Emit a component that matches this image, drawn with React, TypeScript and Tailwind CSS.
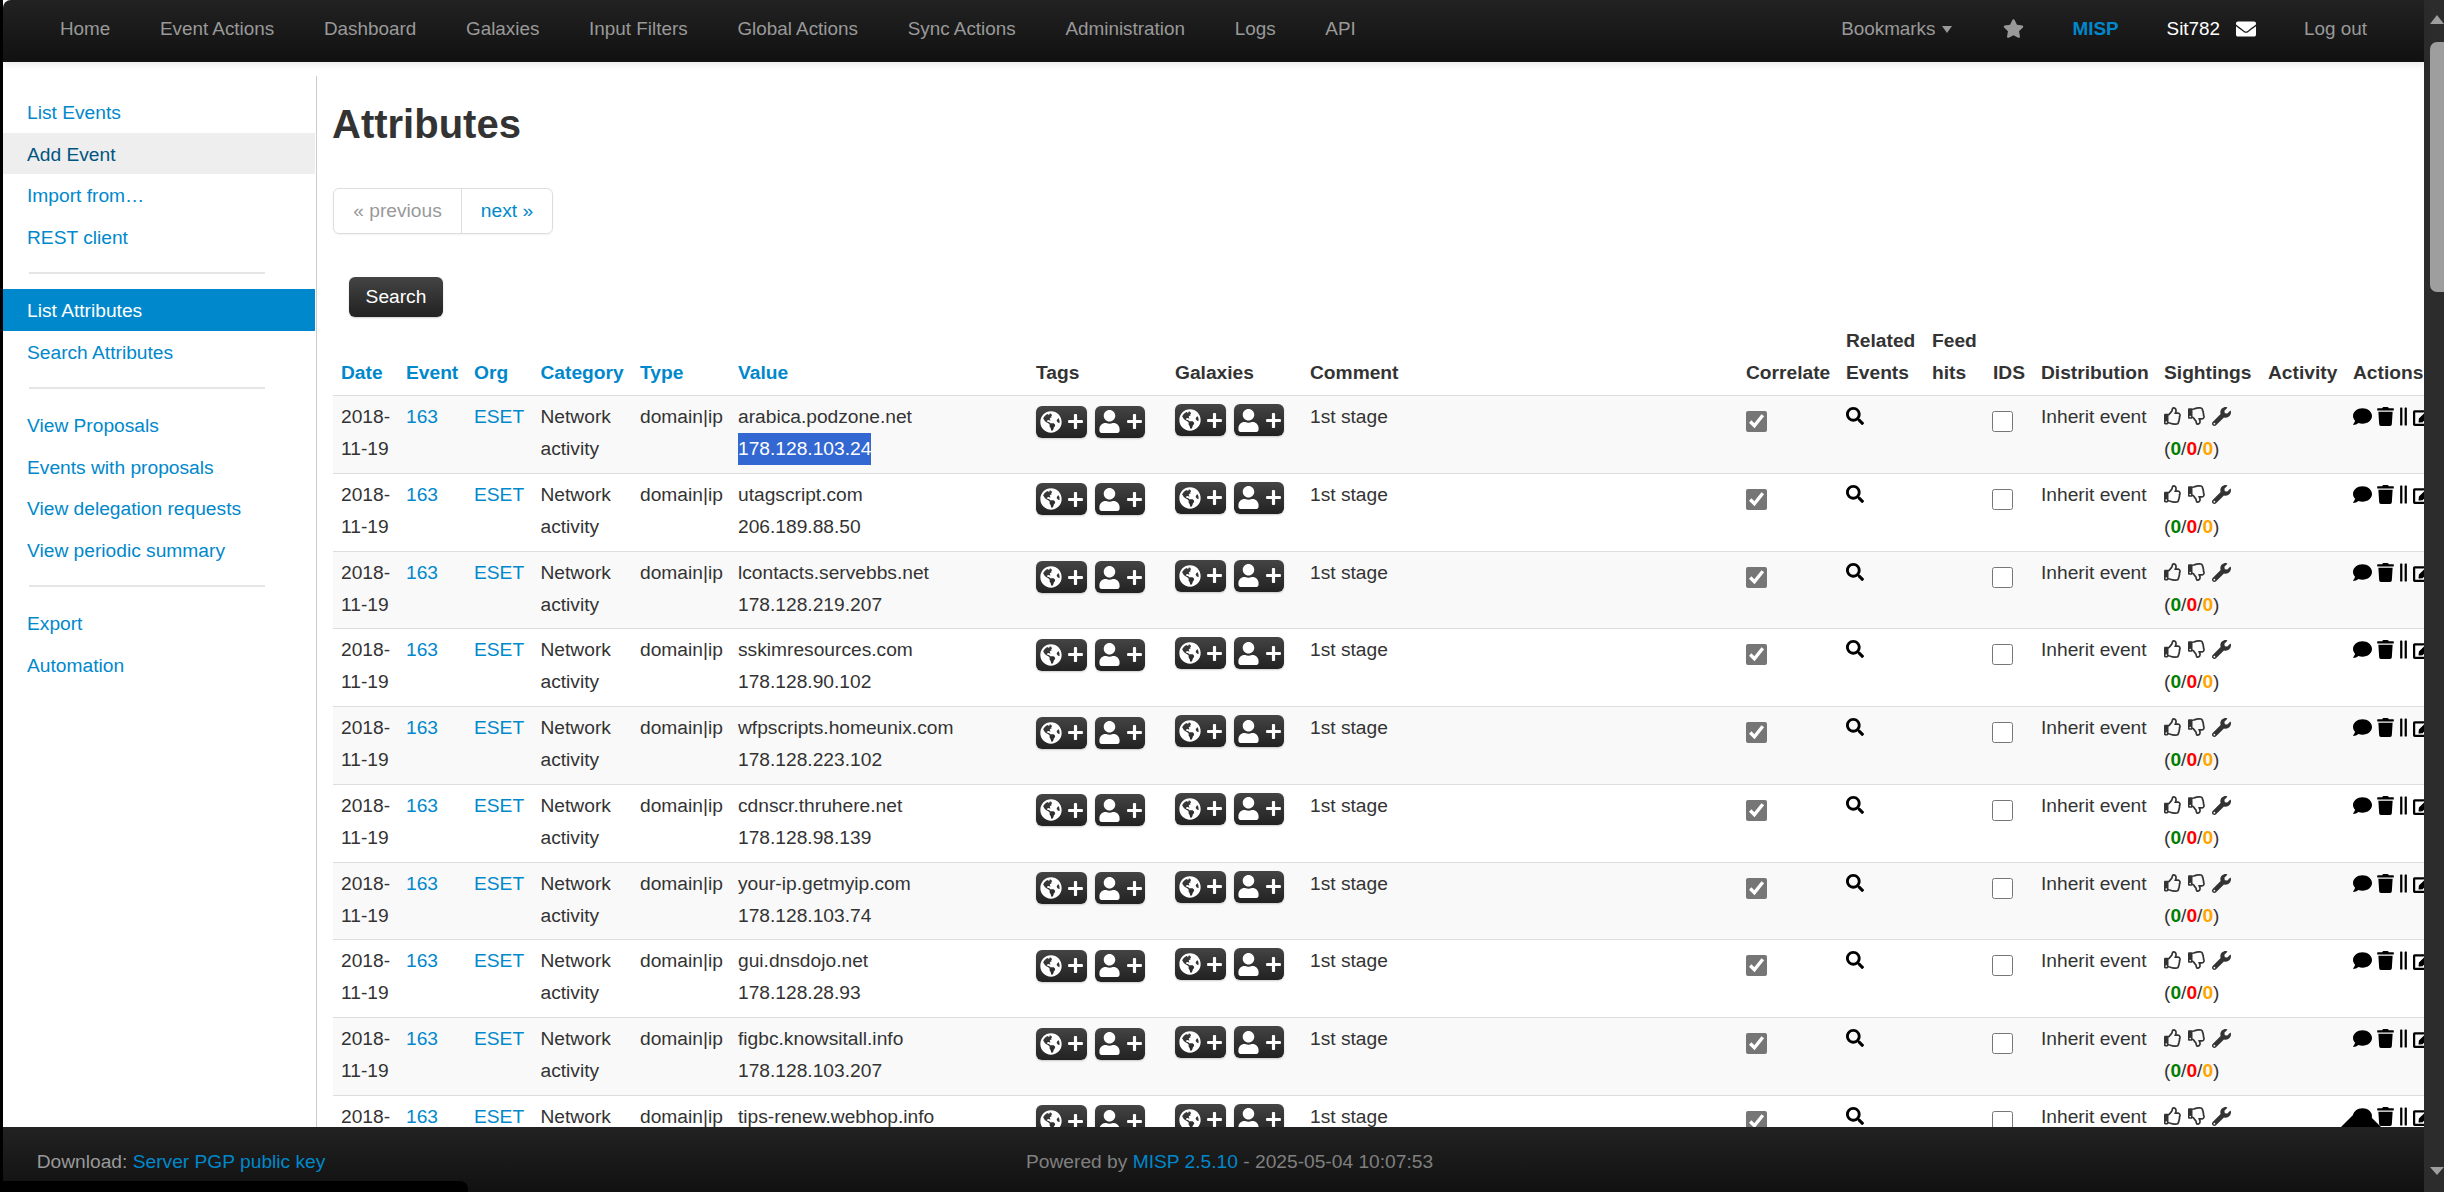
import { FaComment, FaEdit, FaEnvelope, FaGlobeAmericas, FaGripLinesVertical, FaPlus, FaRegThumbsDown, FaRegThumbsUp, FaSearch, FaStar, FaTrash, FaUser, FaWrench } from 'react-icons/fa'

const navLeft = ['Home', 'Event Actions', 'Dashboard', 'Galaxies', 'Input Filters', 'Global Actions', 'Sync Actions', 'Administration', 'Logs', 'API']

const sideGroups = [
  ['List Events', 'Add Event', 'Import from…', 'REST client'],
  ['List Attributes', 'Search Attributes'],
  ['View Proposals', 'Events with proposals', 'View delegation requests', 'View periodic summary'],
  ['Export', 'Automation'],
]

const rows = [
  ['arabica.podzone.net', '178.128.103.24'],
  ['utagscript.com', '206.189.88.50'],
  ['lcontacts.servebbs.net', '178.128.219.207'],
  ['sskimresources.com', '178.128.90.102'],
  ['wfpscripts.homeunix.com', '178.128.223.102'],
  ['cdnscr.thruhere.net', '178.128.98.139'],
  ['your-ip.getmyip.com', '178.128.103.74'],
  ['gui.dnsdojo.net', '178.128.28.93'],
  ['figbc.knowsitall.info', '178.128.103.207'],
  ['tips-renew.webhop.info', '178.128.103.208'],
]

const gridCols = 'grid grid-cols-[65px_68px_66.5px_99.5px_98px_298px_139px_135px_436px_100px_86px_61px_48px_123px_104px_85px_120px] w-[2132px]'

function SideItem({ label }: { label: string }) {
  let cls = 'text-[#0088cc]'
  if (label === 'Add Event') cls = 'bg-[#eeeeee] text-[#005580]'
  if (label === 'List Attributes') cls = 'bg-[#0088cc] text-white'
  return <div className={`flex h-[41.5px] items-center pl-6 pt-[2.5px] ${cls}`}>{label}</div>
}

function TagButton({ kind }: { kind: 'globe' | 'user' }) {
  return (
    <div className={`flex h-[32px] items-center rounded-[6px] bg-linear-to-b from-[#444444] to-[#222222] text-white shadow-[0_1px_2px_rgba(0,0,0,0.2)] ${kind === 'globe' ? 'w-[51px] gap-[5px] pl-[4px]' : 'w-[50px] gap-[5px] pl-[3px]'}`}>
      {kind === 'globe' ? <FaGlobeAmericas className="size-[22px]" /> : <FaUser className="size-[23px]" />}
      <FaPlus className="size-[17px]" />
    </div>
  )
}

function Row({ value, ip, index }: { value: string; ip: string; index: number }) {
  const cell = 'px-2 pt-[5px] whitespace-nowrap'
  return (
    <div className={`${gridCols} box-border h-[77.78px] shrink-0 border-t border-[#dddddd] ${index % 2 === 0 ? 'bg-[#f9f9f9]' : 'bg-white'}`}>
      <div className={cell}>
        <div>2018-</div>
        <div>11-19</div>
      </div>
      <div className={`${cell} text-[#0088cc]`}>163</div>
      <div className={`${cell} text-[#0088cc]`}>ESET</div>
      <div className={cell}>
        <div>Network</div>
        <div>activity</div>
      </div>
      <div className={cell}>domain|ip</div>
      <div className={cell}>
        <div>{value}</div>
        {index === 0 ? <div><span className="inline-block bg-[#3367d1] text-white">{ip}</span></div> : <div>{ip}</div>}
      </div>
      <div className="flex gap-[8px] px-2 pt-[9.5px]">
        <TagButton kind="globe" />
        <TagButton kind="user" />
      </div>
      <div className="flex gap-[8px] px-2 pt-[8px]">
        <TagButton kind="globe" />
        <TagButton kind="user" />
      </div>
      <div className={cell}>1st stage</div>
      <div className="px-2 pt-[15px]">
        <input type="checkbox" checked readOnly className="block size-[21px] accent-[#767676]" />
      </div>
      <div className="px-2 pt-[11px] text-black">
        <FaSearch className="size-[18px]" />
      </div>
      <div />
      <div className="px-2 pt-[15px]">
        <input type="checkbox" checked={false} readOnly className="-ml-px block size-[21px] accent-[#767676]" />
      </div>
      <div className={cell}>Inherit event</div>
      <div className={cell}>
        <div className="flex h-[32px] items-start gap-[6px] pt-[6px] text-[#333333]">
          <FaRegThumbsUp className="size-[18px]" />
          <FaRegThumbsDown className="size-[18px]" />
          <FaWrench className="size-[19px]" />
        </div>
        <div>
          (<b className="text-[#008000]">0</b>/<b className="text-[#ff0000]">0</b>/<b className="text-[#ffa500]">0</b>)
        </div>
      </div>
      <div />
      <div className="flex items-start gap-[5px] px-2 pt-[11px] text-black">
        <FaComment className="size-[19px]" />
        <FaTrash className="h-[19px] w-[17px]" />
        <FaGripLinesVertical className="h-[19px] w-[9px]" />
        <FaEdit className="size-[20px]" />
      </div>
    </div>
  )
}

export default function App() {
  const head = 'px-2 pb-[6px] font-bold whitespace-nowrap'
  const headLink = `${head} text-[#0088cc]`

  return (
    <div className="flex h-[1192px] w-[2444px] overflow-hidden bg-black pl-[3px] font-['Liberation_Sans',Arial,sans-serif] text-[19.2px] leading-[32px] text-[#333333]">
      <div className="flex min-w-0 flex-1 flex-col bg-white">
        <nav className="relative z-10 flex h-[62px] shrink-0 items-center rounded-tl-lg bg-linear-to-b from-[#222222] to-[#111111] pb-[5px] pl-[32px] pr-[57px] text-[18.87px] text-[#999999] shadow-[0_2px_8px_rgba(0,0,0,0.1)]">
          {navLeft.map((item) => (
            <span key={item} className="px-[24.89px]">{item}</span>
          ))}
          <div className="ml-auto flex items-center gap-[48px]">
            <span className="flex items-center gap-[7px]">
              Bookmarks
              <span className="mr-[3px] mt-[1px] border-x-[5.5px] border-t-[7px] border-x-transparent border-t-[#999999]" />
            </span>
            <FaStar className="size-[21px]" />
            <span className="font-bold text-[#0088cc]">MISP</span>
            <span className="flex items-center gap-[16px] text-white">
              Sit782
              <FaEnvelope className="size-[20px]" />
            </span>
            <span>Log out</span>
          </div>
        </nav>

        <div className="flex min-h-0 flex-1 overflow-hidden">
          <aside className="mr-px w-[312px] shrink-0 pt-[29px]">
            {sideGroups.map((group, i) => (
              <div key={i}>
                {i > 0 && (
                  <div className="flex h-[32px] items-center pl-[26px]">
                    <div className="h-[1.5px] w-[236px] bg-[#e5e5e5]" />
                  </div>
                )}
                {group.map((label) => (
                  <SideItem key={label} label={label} />
                ))}
              </div>
            ))}
          </aside>
          <div className="mt-[14px] w-px shrink-0 bg-[#cccccc]" />

          <main className="min-w-0 flex-1 overflow-hidden pl-4 pt-[31px]">
            <h2 className="-ml-px text-[40px] font-bold leading-[62px]">Attributes</h2>

            <div className="mt-[33px] flex h-[46px] w-[220px] rounded-[6px] border border-[#dddddd] shadow-[0_1px_2px_rgba(0,0,0,0.05)]">
              <span className="flex w-[128px] items-center justify-center border-r border-[#dddddd] text-[#999999]">« previous</span>
              <span className="flex flex-1 items-center justify-center text-[#0088cc]">next »</span>
            </div>

            <div className="mt-[43px] ml-4 flex h-[40px] w-[94px] items-center justify-center rounded-[6px] bg-linear-to-b from-[#444444] to-[#222222] text-white shadow-[0_1px_2px_rgba(0,0,0,0.2)]">
              Search
            </div>

            <div className={`${gridCols} h-[78px] items-end`}>
              <div className={headLink}>Date</div>
              <div className={headLink}>Event</div>
              <div className={headLink}>Org</div>
              <div className={headLink}>Category</div>
              <div className={headLink}>Type</div>
              <div className={headLink}>Value</div>
              <div className={head}>Tags</div>
              <div className={head}>Galaxies</div>
              <div className={head}>Comment</div>
              <div className={head}>Correlate</div>
              <div className={head}>Related<br />Events</div>
              <div className={head}>Feed<br />hits</div>
              <div className={head}>IDS</div>
              <div className={head}>Distribution</div>
              <div className={head}>Sightings</div>
              <div className={head}>Activity</div>
              <div className={head}>Actions</div>
            </div>

            {rows.map(([value, ip], i) => (
              <Row key={value} value={value} ip={ip} index={i} />
            ))}
          </main>
        </div>

        <footer className="relative z-10 flex h-[65px] shrink-0 items-center bg-linear-to-b from-[#222222] to-[#111111] pt-[5px] text-[#808080]">
          <div className="w-[1023px] shrink-0 pl-[33.7px]">
            <span className="text-[#999999]">Download: </span>
            <span className="text-[#0088cc]">Server PGP public key</span>
          </div>
          <div>
            Powered by <span className="text-[#0088cc]">MISP 2.5.10</span> - 2025-05-04 10:07:53
          </div>
          <svg className="absolute bottom-full left-[2338px]" width="40" height="19" viewBox="0 0 40 19">
            <path d="M0 19 L16 3 Q20 -1 24 3 L40 19 Z" fill="#000000" />
          </svg>
          <div className="absolute -left-[3px] bottom-0 h-[11px] w-[468px] rounded-tr-lg bg-black" />
        </footer>
      </div>

      <div className="flex w-[20px] shrink-0 flex-col items-end bg-[#2c2c2c] pb-[17px] pt-[15px]">
        <div className="border-x-[7px] border-b-[9px] border-x-transparent border-b-[#9e9e9e]" />
        <div className="mt-[18px] h-[250px] w-[14.5px] rounded-l-[7px] bg-[#9e9e9e]" />
        <div className="mt-auto border-x-[7px] border-t-[8px] border-x-transparent border-t-[#9e9e9e]" />
      </div>
    </div>
  )
}
